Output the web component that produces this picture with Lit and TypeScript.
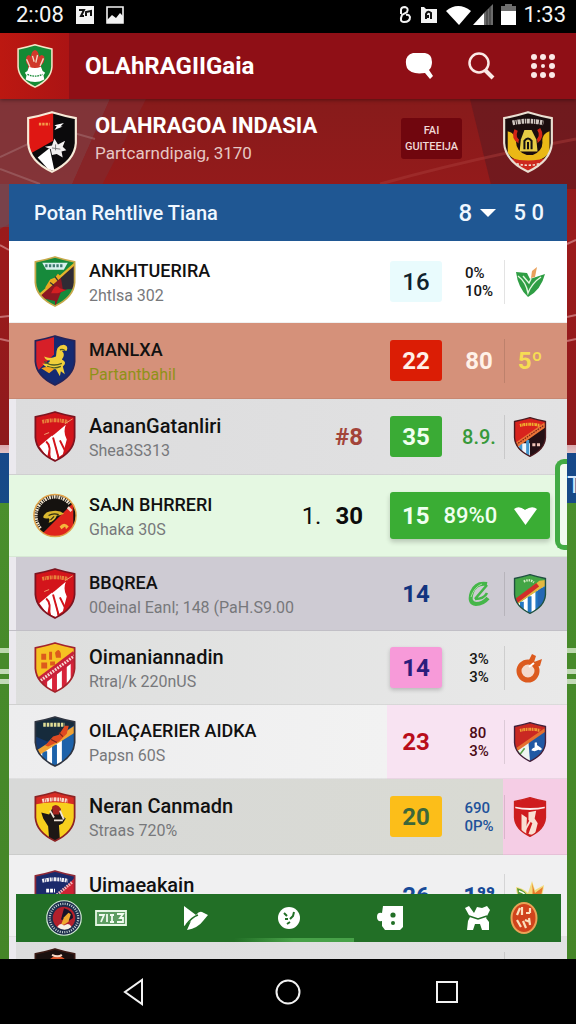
import { LitElement, html, svg, css, nothing, type TemplateResult } from "lit";
import { customElement, property } from "lit/decorators.js";

const SHIELD = "M2 6 Q12 4 22 1 Q32 4 42 6 V27 Q41 42 22 51 Q3 42 2 27Z";

const stripes = (color: string) => svg`
  <path d="M2 42 L42 14 V52 H2Z" fill="#fff"/>
  <path d="M9 36 h5 v16 h-5z M19 29 h5 v23 h-5z M29 22 h5 v30 h-5z M38 16 h5 v30 h-5z" fill=${color}/>`;

const lettering = (y: number, color: string) => svg`
  <path d=${`M9 ${y} Q22 ${y - 3} 35 ${y}`} fill="none" stroke=${color} stroke-width="4" stroke-dasharray="2 .7 1 .6 2.600 .8"/>`;

const redWhite = svg`
  <rect width="44" height="52" fill="#d3141b"/>
  ${lettering(11, "#e8813c")}
  <path d="M6 36 L19 25 L14 47Z M14 30 L21 24 L25 51 L18 48Z M20 25 L33 14 Q30 22 34 29 L30 44 L26 47Z" fill="#fff"/>
  <path d="M13 31 Q19 36 15 49 M20 27 L26 49 M27 30 L33 42" stroke="#d3141b" stroke-width="2" fill="none"/>
  <path d="M11 24 l5 -2 M32 13 l8 -5" stroke="#f0a070" stroke-width="1"/>`;

const CRESTS: Record<string, { edge: string; art: TemplateResult; round?: boolean }> = {
  home: {
    edge: "#f4e6c8",
    art: svg`
      <rect width="44" height="52" fill="#158a35"/>
      <path d="M12 15 q3 -4 5 0 q1 -7 5 -8 q4 1 5 8 q3 -4 6 0 q1 7 -4 10 q1 5 -3 6 h-9 q-4 -1 -3 -6 q-4 -3 -2 -10z" fill="#d0392b"/>
      <path d="M12 18 l4 9 M32 17 l-4 9 M19 14 l2 7 M25 13 l-2 9" stroke="#f1d9c4" stroke-width="1.6"/>
      <path d="M15 27 q7 3 14 0 l2 5 l3 2 l-2 3 l1 5 q-11 6 -22 0 l1 -5 l-2 -3 l3 -2z" fill="#fff"/>
      <path d="M13 36 q9 4 18 0" stroke="#158a35" stroke-width="1.6" stroke-dasharray="2 1" fill="none"/>`,
  },
  hero: {
    edge: "#f7ead8",
    art: svg`
      <rect width="44" height="52" fill="#0b0a0c"/>
      <path d="M0 0 H23 V25 L0 38Z" fill="#df1713"/>
      <path d="M11 11 h9" stroke="#f49b48" stroke-width="2.2" stroke-dasharray="2 .8"/>
      <path d="M24 12 l8 -2 l-3 3 l2 0 l-7 3 l2 -3z" fill="#fff"/>
      <path d="M10 39 L20 31 L24 50 L19 49Z" fill="#fff"/>
      <path d="M16 30 l6 -1 l2 -6 l3 5 l6 -3 l-2 5 l3 3 l-4 1 l1 5 l-5 -3 l-4 1 l-1 -5z" fill="#f1efef"/>
      <path d="M22 31 l7 1 M25 28 v5" stroke="#777" stroke-width=".8"/>`,
  },
  rival: {
    edge: "#eadfd2",
    art: svg`
      <rect width="44" height="52" fill="#1a0d0e"/>
      ${lettering(10, "#cfc6c0")}
      <path d="M5 17 q7 2 7 9 q0 8 9 11 h5 q9 -4 8 -12 q0 -6 6 -8 v18 q-7 8 -18 8 q-12 0 -17 -8z" fill="#eab816"/>
      <path d="M12 16 q-3 7 3 10 M31 15 q4 6 -2 11" stroke="#d22416" stroke-width="3" fill="none"/>
      <circle cx="22" cy="26" r="8" fill="#15110e"/>
      <path d="M19 16 h6 l4 8 l1 10 h-15 l1 -10z" fill="#e7cb45"/>
      <path d="M19 32 v-7 q3 -4 6 0 v7 M22 26 v6" stroke="#141012" stroke-width="1.7" fill="none"/>
      <path d="M2 38 q20 7 40 0 v6 l-20 8 l-20 -8z" fill="#cd281e"/>
      <path d="M6 42 q16 7 32 0" stroke="#f0ddd0" stroke-width="1.3" stroke-dasharray="2 1.4" fill="none"/>`,
  },
  green: {
    edge: "#c7a94a",
    art: svg`
      <rect width="44" height="52" fill="#168a3b"/>
      <path d="M5 42 L42 9 V30 L28 37 L22 52Z" fill="#8d1822"/>
      <path d="M28 22 L42 10 V34 L30 34Z" fill="#2f2b34"/>
      <path d="M9 7 h26 l-4 7 h-18z" fill="#d8f1ee"/>
      <path d="M12 10 h19" stroke="#3c7a70" stroke-width="3" stroke-dasharray="2.4 1.4"/>
      <path d="M5 41 L42 8" stroke="#e4b62d" stroke-width="2.4"/>
      <path d="M12 32 l5 -8 l5 -2 l3 -4 l3 3 l-5 5 l-9 8z" fill="#e9a820"/>
      <path d="M17 27 l4 3 M22 21 l3 4" stroke="#333" stroke-width="1.3"/>
      <path d="M20 34 q3 -6 7 -1 l6 2 l-8 3 h-7z" fill="#d31f22"/>
      <path d="M5 42 Q10 46 22 51 L22 46Z" fill="#168a3b"/>`,
  },
  eagle: {
    edge: "#24245a",
    art: svg`
      <rect width="44" height="52" fill="#152a72"/>
      <path d="M0 0 H21 V20 L4 37 L0 30Z" fill="#d61f28"/>
      <path d="M23 22 q0 -12 8 -12 q5 1 3 6 l-5 0 q4 4 0 9 q6 3 1 7 l2 8 l-4 -3 l-1 5 l-4 -7 q-9 0 -14 -6 q7 1 8 -3 q-5 0 -6 -4 q6 3 12 0z" fill="#f0cf3a"/>
      <path d="M11 27 q8 6 18 2 M27 15 q4 -1 5 1 M14 32 q7 3 14 0" stroke="#4d5c25" stroke-width="1.4" fill="none"/>
      <path d="M8 34 q8 -3 13 1 l-5 4z" fill="#f4a21e"/>`,
  },
  red: { edge: "#7d1420", art: redWhite },
  disc: {
    edge: "#e2a44a",
    round: true,
    art: svg`
      <rect width="48" height="48" fill="#15120f"/>
      <path d="M10 44 L44 10 V48 H10Z" fill="#df241c"/>
      <path d="M8 38 A20 20 0 0 1 40 11" fill="none" stroke="#efe4cf" stroke-width="4" stroke-dasharray="2 1 1.2 .9"/>
      <path d="M11 26 q2 -7 11 -7 q7 -1 12 3 q-5 2 -8 2 q-2 6 -9 8 q2 -4 0 -5 q-4 1 -6 -1z" fill="#d9b72f"/>
      <path d="M17 24 q5 -3 11 -1 M19 29 l4 -4" stroke="#2d2a12" stroke-width="1.3" fill="none"/>
      <path d="M29 36 q5 -6 10 0 l-3 3 l-1 -3 l-4 3z" fill="#f4b63c"/>
      <path d="M38 15 l4 4" stroke="#f7d9cc" stroke-width="3"/>`,
  },
  gold: {
    edge: "#a3242b",
    art: svg`
      <rect width="44" height="52" fill="#f6c222"/>
      ${stripes("#d8243a")}
      <path d="M3 43 L43 13" stroke="#c9213a" stroke-width="9"/>
      <path d="M5 41 L42 14" stroke="#f7d6d0" stroke-width="3" stroke-dasharray="1.8 1.2"/>
      <path d="M8 12 h5 v6 h-5z M16 10 h3 v8 h-3z M22 11 q4 -6 6 1 v4 h-5z M8 21 h6 v6 h-6z M17 20 h5 v4 h-5z" fill="#dc5a1c"/>`,
  },
  blue: {
    edge: "#2f3440",
    art: svg`
      <rect width="44" height="52" fill="#15396f"/>
      <path d="M0 0 H44 V8 L14 26 L0 20Z" fill="#162b3c"/>
      ${stripes("#1d62aa")}
      <path d="M32 16 L44 8 V40 L32 46Z" fill="#1d62aa"/>
      <path d="M10 9 h22" stroke="#dfdc96" stroke-width="4" stroke-dasharray="2.6 1"/>
      <path d="M2 36 L42 10 V17 L4 41Z" fill="#f0a234"/>
      <path d="M12 30 l8 -9 l6 -2 l6 -9 l4 0 l-2 8 l-8 8 l-11 5z" fill="#de4a22"/>
      <path d="M18 24 l6 3 M26 17 l4 4" stroke="#7b2418" stroke-width="1.2"/>`,
  },
  yellow: {
    edge: "#8d2324",
    art: svg`
      <rect width="44" height="52" fill="#f8cf1d"/>
      <path d="M0 0 H44 V14 Q22 9 0 14Z" fill="#d62c24"/>
      ${lettering(10, "#f8dacb")}
      <path d="M8 22 l8 2 l3 -6 q5 -5 9 1 l0 6 l5 3 l-3 5 l-4 2 l1 14 l-5 3 l-6 -3 l-1 -13 l-5 -8z" fill="#1d1715"/>
      <path d="M19 16 q5 -4 9 2 l-2 6 h-6z" fill="#a32420"/>
      <path d="M17 20 l4 7 M27 20 l4 9 M21 30 l9 0" stroke="#efe4da" stroke-width="1.8"/>`,
  },
  navy: {
    edge: "#8d2836",
    art: svg`
      <rect width="44" height="52" fill="#1b2a6b"/>
      <path d="M18 34 L42 8 V52 H18Z" fill="#cf2233"/>
      ${lettering(11, "#f0eef4")}
      <path d="M13 21 h9" stroke="#fff" stroke-width="4" stroke-dasharray="3 1"/>
      <path d="M22 27 L40 12" stroke="#f4b8b8" stroke-width="3" stroke-dasharray="1.6 1"/>`,
  },
  ember: {
    edge: "#3a1a14",
    art: svg`
      <rect width="44" height="52" fill="#190f0e"/>
      <path d="M14 15 q8 -12 18 -4 q-4 0 -5 5 q-6 4 -15 2z" fill="#d9552a"/>
      <path d="M19 7 q6 3 10 0" stroke="#f6d9c6" stroke-width="2" fill="none"/>
      <path d="M4 30 L40 16 V52Z" fill="#b92a1d"/>`,
  },
  copper: {
    edge: "#4a1a20",
    art: svg`
      <rect width="44" height="52" fill="#d8231d"/>
      <path d="M2 38 L42 10 V52 H2Z" fill="#251015"/>
      <path d="M2 34 h20 v18 h-20z" fill="#f2f6fa"/>
      <path d="M8 34 h4 v18 h-4z M17 30 h4 v22 h-4z" fill="#4597cf"/>
      <path d="M2 38 L42 10" stroke="#ec7537" stroke-width="6"/>
      <path d="M4 36 L40 11" stroke="#7c2119" stroke-width="1.6" stroke-dasharray="2 1.4"/>
      ${lettering(11, "#f0b02e")}
      <path d="M25 36 h11" stroke="#f0c4b8" stroke-width="4" stroke-dasharray="4 2"/>`,
  },
  lagoon: {
    edge: "#1f5140",
    art: svg`
      <rect width="44" height="52" fill="#43a545"/>
      ${stripes("#2479c4")}
      <path d="M32 18 h10 v22 l-10 6z" fill="#2468b4"/>
      <path d="M2 36 L34 9 L42 8 V15 L4 40Z" fill="#e4b840"/>
      <path d="M3 36 L32 14" stroke="#d02e2a" stroke-width="6"/>
      <path d="M14 10 q7 -4 13 1" stroke="#d2ecc2" stroke-width="3" stroke-dasharray="2 1.2" fill="none"/>`,
  },
  royal: {
    edge: "#43203a",
    art: svg`
      <rect width="44" height="52" fill="#c92822"/>
      <path d="M2 40 L42 10 V52 H2Z" fill="#2159a4"/>
      <path d="M4 38 L20 26 L22 51 L12 48Z" fill="#eef4f0"/>
      <path d="M3 34 L9 42 L15 34" stroke="#57a34a" stroke-width="2" fill="none"/>
      <path d="M3 37 L42 10" stroke="#e5702f" stroke-width="4"/>
      ${lettering(11, "#ef9e33")}
      <path d="M28 27 q4 -2 3 3 l6 4 q1 4 -4 2 l-5 2 l-4 -1 q0 -3 4 -4z" fill="#fff"/>`,
  },
  scarlet: {
    edge: "#c9201f",
    art: svg`
      <rect width="44" height="52" fill="#cf1b1e"/>
      <path d="M0 12 Q22 17 44 12 V14 Q22 20 0 14Z" fill="#fbeaea"/>
      <path d="M11 22 L18 27 L17 50 L11 45Z M20 20 L30 18 L28 28 L32 34 L28 50 L20 48 L25 34 L20 30Z" fill="#f9dfd2"/>
      <path d="M15 44 L24 28" stroke="#f9dfd2" stroke-width="2.4"/>`,
  },
  seal: {
    edge: "#cfe6d2",
    round: true,
    art: svg`
      <rect width="48" height="48" fill="#1c2d4c"/>
      <circle cx="24" cy="24" r="19" fill="none" stroke="#c9d7d4" stroke-width="3" stroke-dasharray="1.300 1.8"/>
      <circle cx="24" cy="24" r="15" fill="#b3202b"/>
      <path d="M24 11 q12 3 12 13 l-6 4 l-10 -2z" fill="#17122a"/>
      <path d="M20 33 l4 -10 l6 -6 l3 2 l-3 10 l-6 4z" fill="#f0a92e"/>
      <path d="M15 36 q4 -7 9 -2 q7 -5 10 2 q-9 7 -19 0z" fill="#f6f0e4"/>`,
  },
};

@customElement("team-crest")
export class TeamCrest extends LitElement {
  @property() kind = "red";

  static styles = css`
    :host { display: block; }
    svg { display: block; width: 100%; height: 100%; }
  `;

  render() {
    const { edge, art, round } = CRESTS[this.kind];
    return round
      ? html`<svg viewBox="0 0 48 48" aria-hidden="true">
          <clipPath id="c"><circle cx="24" cy="24" r="23"/></clipPath>
          <g clip-path="url(#c)">${art}</g>
          <circle cx="24" cy="24" r="23" fill="none" stroke=${edge} stroke-width="1.6"/>
        </svg>`
      : html`<svg viewBox="0 0 44 52" aria-hidden="true">
          <clipPath id="c"><path d=${SHIELD}/></clipPath>
          <g clip-path="url(#c)">${art}</g>
          <path d=${SHIELD} fill="none" stroke=${edge} stroke-width="1.8"/>
        </svg>`;
  }
}

const leaf = html`<svg class="mark" viewBox="0 0 30 32" aria-hidden="true">
  <path d="M16 12 L17 5 L22 1 L20 11Z" fill="#e9a15c"/>
  <path d="M1 6 L12 7 L15 13 L30 8 Q26 24 13 31 Q3 22 1 6Z" fill="#2f9e44"/>
  <path d="M3 10 Q11 16 13 27 Q17 17 26 11 M8 10 L14 17 L16 13" stroke="#e4f7e0" stroke-width="1.4" fill="none"/>
</svg>`;

const flame = html`<svg class="mark" viewBox="0 0 30 32" aria-hidden="true">
  <path d="M1 7 Q8 8 13 13 L17 1 L20 10 L29 5 Q27 26 14 31 Q2 24 1 7Z" fill="#f3dc7e"/>
  <path d="M2 8 Q11 10 14 19 L14 30 Q3 24 2 8Z" fill="#5b9b35"/>
  <path d="M17 3 L20 13 L28 7 Q26 22 15 28 Q19 16 17 3Z" fill="#e87a2b"/>
  <path d="M4 11 Q12 13 15 24" stroke="#fff" stroke-width="1.6" fill="none"/>
</svg>`;

const ring = html`<svg class="mark" viewBox="0 0 30 32" aria-hidden="true">
  <circle cx="13" cy="19" r="9" fill="#f3d9cc" stroke="#dc5a1e" stroke-width="5"/>
  <path d="M14 8 L17 2 L21 4 L19 10 L27 7 L25 14 L20 15Z" fill="#dc5a1e"/>
  <path d="M14 15 l5 -4" stroke="#fff" stroke-width="2"/>
</svg>`;

const swirl = html`<svg class="swirl" viewBox="0 0 24 28" aria-hidden="true">
  <path d="M20 4 Q9 2 5 12 Q1 23 9 24 Q16 24 21 18" stroke="#45b649" stroke-width="4" fill="none"/>
  <path d="M8 19 L20 5 M8 19 Q17 19 20 13" stroke="#45b649" stroke-width="2.600" fill="none"/>
  <path d="M4 17 Q7 7 15 4" stroke="#a7e29e" stroke-width="1" fill="none"/>
</svg>`;

interface Team {
  name: string;
  note: string;
  crest: string;
  tone: string;
  aux?: string;
  score: string;
  badge?: string;
  rate: TemplateResult;
  tail: TemplateResult;
}

const crestTail = (kind: string) => html`<team-crest class="small-crest" kind=${kind}></team-crest>`;

const TEAMS: Team[] = [
  { name: "ANKHTUERIRA", note: "2htlsa 302", crest: "green", tone: "tall white", score: "16", badge: "ice",
    rate: html`<span class="pair">0%<br>10%</span>`, tail: leaf },
  { name: "MANLXA", note: "Partantbahil", crest: "eagle", tone: "salmon", score: "22", badge: "crimson",
    rate: html`<b class="big">80</b>`, tail: html`<b class="big lemon">5º</b>` },
  { name: "AananGatanliri", note: "Shea3S313", crest: "red", tone: "grey inset", aux: "#8", score: "35", badge: "leafy",
    rate: html`<span class="big lime">8.9.</span>`, tail: crestTail("copper") },
  { name: "SAJN BHRRERI", note: "Ghaka 30S", crest: "disc", tone: "tall mint", aux: "30", score: "15", rate: html`89%0`, tail: html`` },
  { name: "BBQREA", note: "00einal Eanl; 148 (PaH.S9.00", crest: "red", tone: "short lilac inset", score: "14", badge: "plain navy",
    rate: swirl, tail: crestTail("lagoon") },
  { name: "Oimaniannadin", note: "Rtra|/k 220nUS", crest: "gold", tone: "short silver inset", score: "14", badge: "pink",
    rate: html`<span class="pair">3%<br>3%</span>`, tail: ring },
  { name: "OILAÇAERIER AIDKA", note: "Papsn 60S", crest: "blue", tone: "short pale", score: "23", badge: "plain ruby",
    rate: html`<span class="pair wine">80<br>3%</span>`, tail: crestTail("royal") },
  { name: "Neran Canmadn", note: "Straas 720%", crest: "yellow", tone: "ash", score: "20", badge: "amber",
    rate: html`<span class="pair ocean">690<br>0P%</span>`, tail: crestTail("scarlet") },
  { name: "Uimaeakain", note: "", crest: "navy", tone: "tall snow", score: "26", badge: "plain royal",
    rate: html`<b class="big royal">1⁹⁹</b>`, tail: flame },
  { name: "", note: "", crest: "ember", tone: "short grey inset", score: "", badge: "plain",
    rate: html``, tail: html`` },
];

@customElement("standings-table")
export class StandingsTable extends LitElement {
  static styles = css`
    :host { display: block; }
    table { display: block; width: 100%; }
    thead, tbody { display: block; }
    th, td { padding: 0; text-align: left; font-weight: 400; }
    .head {
      display: flex; align-items: center; height: 57px; padding: 0 23px 0 25px;
      background: #1f5793; color: #f0f7ff; font-size: 20px;
    }
    .head-title { flex: 1; font-weight: 500; }
    .pick { display: flex; align-items: center; gap: 7px; margin-right: 18px; }
    .pick svg { width: 16px; height: 10px; }
    select { appearance: none; border: 0; margin: 0; padding: 0; background: none; color: inherit; font: inherit; font-size: 24px; font-weight: 500; }
    .head-end { font-size: 22px; font-weight: 500; }

    .row {
      display: grid; grid-template-columns: 44px minmax(0, 1fr) auto 52px 62px 51px;
      align-items: center; height: 76px; padding: 0 12px 0 24px; box-sizing: border-box;
      border-bottom: 1px solid #0000000f;
    }
    .tall { height: 82px; }
    .short { height: 74px; }
    .white { background: #fff; }
    .salmon { background: #d5917a; }
    .grey { background: linear-gradient(90deg, #dcdcdd, #e2e2e3); }
    .mint { background: #e5f8e2; }
    .lilac { background: #cecbd3; }
    .silver { background: linear-gradient(90deg, #dddedd, #e9e9e9); }
    .pale { background: linear-gradient(90deg, #ededee, #f2f2f2 378px, #f8e3f2 378px); }
    .ash { background: linear-gradient(90deg, #d8d9d8, #d9dad3 494px, #f5cde5 494px); }
    .snow { background: #f0f0f1; }
    .inset { box-shadow: inset 7px 0 #ebe9ee; }

    .crest { width: 44px; height: 51px; }
    .team { padding: 3px 0 0 12px; }
    .name, .note { display: block; min-height: 24px; white-space: nowrap; }
    .name { color: #111; font-size: 20px; line-height: 26px; font-weight: 500; }
    .note { color: #77787b; font-size: 16px; line-height: 24px; }
    .caps { font-size: 18px; }
    .salmon .note { color: #8f9118; }
    .aux { padding-right: 27px; color: #a34439; font-size: 24px; font-weight: 700; }
    .mint .aux { color: #0c0c0c; }
    .lead { margin-right: 14px; font-weight: 400; }

    .score { display: grid; place-items: center; height: 41px; border-radius: 3px; font-size: 24px; font-weight: 700; color: #fff; }
    .ice { background: #e9fbfd; color: #10222d; font-weight: 500; }
    .crimson { background: #db1d05; color: #fff0e8; }
    .leafy { background: #3aab35; color: #f0fff0; }
    .pink { background: #f79ad9; color: #2b1d7c; box-shadow: 0 2px 4px #0003; }
    .amber { background: #fcbe19; color: #3d673a; }
    .navy { color: #12347f; }
    .ruby { color: #b90d1b; }
    .royal { color: #174a98; }

    .rate { display: grid; place-items: center; padding-left: 12px; }
    .pair { color: #161616; font-size: 15px; line-height: 18px; font-weight: 500; text-align: left; }
    .wine { color: #4c0a16; }
    .ocean { color: #21529a; }
    .big { font-size: 24px; color: #fff1e8; }
    .big.royal { color: #174a98; }
    .big.lemon { color: #f6dc53; }
    .big.lime { color: #37993a; font-size: 20px; font-weight: 500; }
    .tail { display: grid; place-items: center; height: 44px; border-left: 1px solid #0000001c; }
    .small-crest { width: 34px; height: 42px; }
    .mark { width: 30px; height: 32px; }
    .swirl { width: 24px; height: 28px; }

    .choice { grid-column: 4 / 7; margin-right: 5px; }
    .choose {
      display: flex; align-items: center; width: 100%; height: 47px; padding: 0 12px; border: 0; border-radius: 3px;
      background: #3aad34; color: #effff0; font: inherit; font-size: 24px; font-weight: 700;
      box-shadow: 0 3px 5px #0003;
    }
    .choose-rate { flex: 1; padding-left: 14px; text-align: left; font-weight: 500; font-size: 22px; }
    .choose svg { width: 25px; height: 20px; }
  `;

  private row(team: Team) {
    const caps = team.name === team.name.toUpperCase();
    return html`<tr class="row ${team.tone}">
      <td><team-crest class="crest" kind=${team.crest}></team-crest></td>
      <th class="team" scope="row">
        <span class="name ${caps ? "caps" : ""}">${team.name}</span>
        <span class="note">${team.note}</span>
      </th>
      <td class="aux">${team.badge ? nothing : html`<span class="lead">1.</span>`}${team.aux ?? nothing}</td>
      ${team.badge
        ? html`<td class="score ${team.badge}">${team.score}</td>
            <td class="rate">${team.rate}</td>
            <td class="tail">${team.tail}</td>`
        : html`<td class="choice">
            <button class="choose">
              <span>${team.score}</span>
              <span class="choose-rate">${team.rate}</span>
              <svg viewBox="0 0 25 20" aria-hidden="true"><path d="M1 3 Q6 -1 12 4 Q19 -1 24 3 L12.500 19Z" fill="#fff"/></svg>
            </button>
          </td>`}
    </tr>`;
  }

  render() {
    return html`<table>
      <thead>
        <tr class="head">
          <th class="head-title" scope="col">Potan Rehtlive Tiana</th>
          <th scope="col">
            <label class="pick">
              <select aria-label="Round"><option>8</option></select>
              <svg viewBox="0 0 16 10" aria-hidden="true"><path d="M0 1 H16 L8 9Z" fill="#fff"/></svg>
            </label>
          </th>
          <th class="head-end" scope="col">5 0</th>
        </tr>
      </thead>
      <tbody>${TEAMS.map((t) => this.row(t))}</tbody>
    </table>`;
  }
}

@customElement("app-root")
export class AppRoot extends LitElement {
  static styles = css`
    :host {
      display: flex; flex-direction: column; height: 100vh; overflow: hidden; background: #000;
      font-family: Roboto, "Liberation Sans", sans-serif;
    }
    button { border: 0; margin: 0; padding: 0; background: none; color: inherit; font: inherit; }
    svg { display: block; }

    .status { display: flex; align-items: center; height: 33px; padding: 0 10px 4px 16px; box-sizing: border-box; color: #f4f4f4; font-size: 22px; line-height: 28px; }
    .status .left, .status .right { display: flex; align-items: center; gap: 12px; }
    .status .left { flex: 1; }
    .status .right { gap: 8px; }
    .pic { width: 18px; height: 18px; }
    .link { width: 14px; height: 18px; }
    .wifi { width: 25px; height: 20px; }
    .bars { width: 20px; height: 21px; margin-left: -6px; }
    .cell { width: 15px; height: 21px; }

    .bar { display: flex; align-items: center; height: 66px; padding-right: 19px; background: #8f0f16; color: #fff; box-shadow: 0 1px 4px #0006; z-index: 1; }
    .home { display: grid; place-items: center; width: 69px; height: 100%; background: linear-gradient(90deg, #bc1811, #ab1414); }
    .home team-crest { width: 38px; height: 44px; }
    .brand { flex: 1; margin: 0; padding-left: 16px; font-size: 24px; line-height: 32px; font-weight: 700; }
    .tools { display: flex; align-items: center; gap: 34px; }
    .tools svg { width: 28px; height: 28px; }

    .main { position: relative; flex: 1; min-height: 0; overflow: hidden;
      background: linear-gradient(#871b1b, #9c1a1b 150px, #8e1a1c 346px, #d9a7ac 346px, #e3c3c5 354px, #17488a 354px, #174a86 404px, #4a8f2d 404px, #478a2a 549px, #bcd8ad 549px, #bcd8ad 554px, #478a2a 554px, #478a2a 570px, #c3dab7 570px, #c3dab7 575px, #478a2a 575px, #478a2a 580px, #c3dab7 580px, #c3dab7 585px, #478a2a 585px, #448527);
    }
    .scene { position: absolute; left: 0; top: 0; width: 100%; height: 400px; }
    .hero { position: relative; display: flex; align-items: center; height: 85px; padding: 0 20px 0 24px; box-sizing: border-box; color: #fff; }
    .hero-crest { width: 56px; height: 62px; }
    .hero-text { flex: 1; padding-left: 15px; }
    .hero-text h2 { margin: 0; font-size: 22px; line-height: 28px; font-weight: 700; }
    .hero-text p { margin: 0; padding-bottom: 6px; font-size: 17px; line-height: 26px; color: #e6c8c4; }
    .tag { display: grid; align-content: center; width: 61px; height: 41px; margin: 0 38px 6px 0; border-radius: 3px; background: #70060e; color: #f0d8d6; font-size: 11px; line-height: 16px; font-weight: 500; text-align: center; white-space: nowrap; }
    .board { position: relative; margin: 0 9px; }

    .side { position: absolute; right: 9px; top: 360px; width: 12px; height: 91px; box-sizing: border-box; border: 5px solid #42ab44; border-right: 0; border-radius: 9px 0 0 9px; background: #f2faf1; }
    .edge { position: absolute; right: 0; top: 372px; width: 9px; height: 30px; overflow: hidden; color: #d5e6fa; font-size: 24px; line-height: 28px; }

    .dock { position: absolute; left: 16px; right: 15px; bottom: 17px; height: 48px; padding: 0 9px 0 24px; display: grid; grid-template-columns: 48fr 46fr 122fr 66fr 136fr 38fr 56fr; background: #226f26; }
    .dock a { display: grid; place-items: center; min-width: 0; color: #fff; }
    .dock svg { width: 28px; height: 28px; }
    .dock .ticket { width: 32px; height: 16px; }
    .dock .news { height: 32px; }
    .seal { width: 36px; height: 36px; }
    .progress { position: absolute; left: 40%; right: 38%; bottom: 0; height: 4px; background: linear-gradient(90deg, #226f26, #47a148 50%); }

    .system { display: flex; align-items: center; justify-content: center; gap: 131px; height: 65px; background: #000; }
    .system button { display: grid; place-items: center; }
    .system svg { width: 28px; height: 28px; }
  `;

  render() {
    return html`
      <div class="status">
        <div class="left">
          <span>2::08</span>
          <svg class="pic" viewBox="0 0 18 18"><path d="M0 0H18V18H0Z" fill="#f3f3f3"/><path d="M3 4h5l-3 6h3 M10 10V6l5-1v5" stroke="#111" stroke-width="2" fill="none"/></svg>
          <svg class="pic" viewBox="0 0 18 18"><path d="M1 1H17V17H1Z" fill="none" stroke="#f3f3f3" stroke-width="1.600"/><path d="M1 17V14L6 9L10 12L14 7L17 10V17Z" fill="#f3f3f3"/></svg>
        </div>
        <div class="right">
          <svg class="link" viewBox="0 0 14 18"><path d="M3 8V4Q3 1 7 1Q11 2 9 6L4 9Q1 16 6 16Q12 16 12 11Q11 8 8 9" fill="none" stroke="#f3f3f3" stroke-width="2"/></svg>
          <svg class="pic" viewBox="0 0 18 18"><path d="M1 1H4L6 3H17V17H1Z" fill="#f3f3f3"/><path d="M6 13V8Q8 4 11 7V13M8 12V9" fill="none" stroke="#111" stroke-width="2"/></svg>
          <svg class="wifi" viewBox="0 0 25 20"><path d="M0 6Q12 -4 25 6L13 20Z" fill="#fff"/></svg>
          <svg class="bars" viewBox="0 0 20 21"><path d="M0 21L11 9V21Z" fill="#fff"/><path d="M11 9L20 0V21H11Z" fill="#6b6b6b"/><path d="M14 6V21M17 3V21" stroke="#333" stroke-width="1"/></svg>
          <svg class="cell" viewBox="0 0 15 21"><path d="M4 0H11V2H15V8H0V2H4Z" fill="#6e6e6e"/><path d="M0 7H15V21H0Z" fill="#fff"/></svg>
          <span>1:33</span>
        </div>
      </div>

      <header class="bar">
        <div class="home"><team-crest kind="home"></team-crest></div>
        <h1 class="brand">OLAhRAGIIGaia</h1>
        <div class="tools">
          <button aria-label="Messages"><svg viewBox="0 0 28 28"><path d="M8 1H20Q27 2 27 10Q27 15 24 18L28 24L25 27L20 21Q6 23 2 16Q-2 4 8 1Z" fill="#fff"/></svg></button>
          <button aria-label="Search"><svg viewBox="0 0 28 28"><circle cx="12" cy="11" r="9.500" fill="none" stroke="#fbe9e6" stroke-width="2.500"/><path d="M18 18L26 26" stroke="#fbe9e6" stroke-width="4"/></svg></button>
          <button aria-label="Apps"><svg viewBox="0 0 28 28" fill="#fbe9e6">
            ${[5, 14, 23].map((y) => [5, 14, 23].map((x) => svg`<circle cx=${x} cy=${y} r=${x === 14 && y === 14 ? 2 : 3}/>`))}
          </svg></button>
        </div>
      </header>

      <main class="main">
        <svg class="scene" viewBox="0 0 576 400" preserveAspectRatio="none" aria-hidden="true">
          <path d="M0 0H110L70 90L0 130Z" fill="#7c4248" opacity=".65"/>
          <path d="M110 0H146L100 90H70Z" fill="#84272b" opacity=".8"/>
          <path d="M0 70L40 85M0 58L60 30L95 40" stroke="#b18488" stroke-width="2" opacity=".4" fill="none"/>
          <path d="M470 0H576V90H492Z" fill="#651a20" opacity=".7"/>
          <path d="M380 85Q470 60 576 40" stroke="#a83a38" stroke-width="3" opacity=".5" fill="none"/>
          <path d="M567 145L576 141M567 218L576 216M567 242L576 240M0 218L9 217M0 240L9 242M0 146L9 151" stroke="#d78f90" stroke-width="2" opacity=".7"/>
          <path d="M0 85H9V128H0Z" fill="#6f4d57" opacity=".6"/>
        </svg>

        <section class="hero">
          <team-crest class="hero-crest" kind="hero"></team-crest>
          <div class="hero-text">
            <h2>OLAHRAGOA INDASIA</h2>
            <p>Partcarndipaig, 3170</p>
          </div>
          <div class="tag"><span>FAI</span><span>GUITEEIJA</span></div>
          <team-crest class="hero-crest" kind="rival"></team-crest>
        </section>

        <standings-table class="board"></standings-table>

        <div class="side"></div>
        <div class="edge">TF</div>

        <nav class="dock" aria-label="Sections">
          <a href="#club" aria-label="Club"><team-crest class="seal" kind="seal"></team-crest></a>
          <a href="#tickets" aria-label="Tickets"><svg class="ticket" viewBox="0 0 32 16"><path d="M1 1H31V15H1Z" fill="#5d9d62" stroke="#e5f7e4" stroke-width="1.800"/><path d="M4 5H9L6 12M12 4V12M15 5H19M17 5V12M15 12H19M22 4H28L25 8H28V12H22" stroke="#f0fbef" stroke-width="1.800" fill="none"/></svg></a>
          <a href="#play" aria-label="Play"><svg viewBox="0 0 28 28"><path d="M3 2L15 11Q18 7 21 8L27 11L22 17Q17 24 6 26L10 17L3 22Z" fill="#fff"/><path d="M5 21Q11 13 17 11" stroke="#226f26" stroke-width="1.500" fill="none"/></svg></a>
          <a href="#players" aria-label="Players"><svg viewBox="0 0 28 28"><circle cx="14" cy="14" r="11" fill="#fff"/><path d="M9 9l3 3M19 8l-1 4l-3 3M15 18l-3 2M10 15h3" stroke="#226f26" stroke-width="2" fill="none"/></svg></a>
          <a href="#cup" aria-label="Cup"><svg viewBox="0 0 28 28"><path d="M7 2H27V23L24 26H9L6 22V17Q1 18 1 13Q1 8 6 9Z" fill="#fff"/><circle cx="17" cy="11" r="2.600" fill="#226f26"/><circle cx="17" cy="19" r="2" fill="#226f26"/></svg></a>
          <a href="#matches" aria-label="Matches"><svg viewBox="0 0 28 28"><path d="M2 4L6 2L11 9L14 3L19 4L24 2L27 6L23 14L26 18V26H19L17 20H12L10 26H4L5 17L7 13Z" fill="#fff"/><path d="M6 12L15 15L24 12" stroke="#226f26" stroke-width="1.500" fill="none"/></svg></a>
          <a href="#news" aria-label="News"><svg class="news" viewBox="0 0 28 32"><ellipse cx="14" cy="16" rx="12.500" ry="15" fill="#d0431c" stroke="#e9a256" stroke-width="2"/><path d="M7 13L10 6M12 13V5M16 11H20M20 6V11M7 18L11 25M13 19L16 26M19 16L20 23M15 18L20 20" stroke="#fbe0bd" stroke-width="2.200"/></svg></a>
          <span class="progress"></span>
        </nav>
      </main>

      <footer class="system">
        <button aria-label="Back"><svg viewBox="0 0 28 28"><path d="M27 2V26L10 14Z" fill="none" stroke="#f2f2f2" stroke-width="2"/></svg></button>
        <button aria-label="Home"><svg viewBox="0 0 28 28"><circle cx="14" cy="14" r="11.500" fill="none" stroke="#f2f2f2" stroke-width="2"/></svg></button>
        <button aria-label="Recent"><svg viewBox="0 0 28 28"><rect x="4" y="4" width="20" height="20" fill="none" stroke="#f2f2f2" stroke-width="2"/></svg></button>
      </footer>
    `;
  }
}
